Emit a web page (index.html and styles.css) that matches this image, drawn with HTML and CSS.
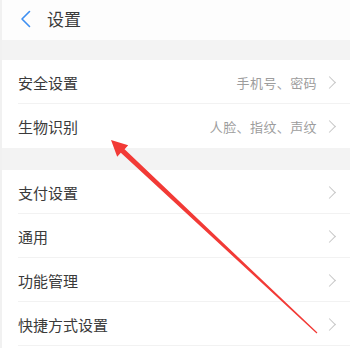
FILE: index.html
```html
<!DOCTYPE html>
<html lang="zh">
<head>
<meta charset="utf-8">
<link rel="stylesheet" href="styles.css">
</head>
<body>
<div class="page">
  <header class="topbar">
    <svg class="back" width="11" height="18" viewBox="0 0 11 18"><path d="M9.5 1.5 L2 9 L9.5 16.5" fill="none" stroke="#3d8ff2" stroke-width="1.6" stroke-linecap="round" stroke-linejoin="round"/></svg>
    <span class="title">设置</span>
  </header>
  <div class="band band-top"></div>
  <ul class="group">
    <li class="row"><span class="label">安全设置</span><span class="value">手机号、密码</span><i class="chev"></i></li>
    <li class="row last"><span class="label">生物识别</span><span class="value">人脸、指纹、声纹</span><i class="chev"></i></li>
  </ul>
  <div class="band band-mid"></div>
  <ul class="group">
    <li class="row"><span class="label">支付设置</span><i class="chev"></i></li>
    <li class="row"><span class="label">通用</span><i class="chev"></i></li>
    <li class="row"><span class="label">功能管理</span><i class="chev"></i></li>
    <li class="row"><span class="label">快捷方式设置</span><i class="chev"></i></li>
  </ul>
  <svg class="annot" width="350" height="348" viewBox="0 0 350 348">
    <polygon fill="#f23a36" points="111,140 128.2,145.2 124.6,149.2 317.4,332.6 316.6,333.4 120.8,152.8 117.2,156.8"/>
  </svg>
</div>
</body>
</html>
```
FILE: styles.css
```css
* { box-sizing: border-box; }
html, body { margin: 0; padding: 0; background: #ffffff; }
body {
  font-family: "Noto Sans CJK SC", "Noto Sans", sans-serif;
  width: 350px;
  height: 348px;
  overflow: hidden;
}
.page {
  position: relative;
  width: 350px;
  height: 348px;
  border-left: 2px solid #f1f1f1;
  background: #ffffff;
}
.topbar {
  height: 40px;
  display: flex;
  align-items: center;
  padding-left: 18px;
  background: #fdfdfd;
}
.back { display: block; margin-top: -2px; }
.title {
  margin-left: 16px;
  font-size: 17px;
  color: #3a3a3a;
  line-height: 1;
  margin-top: -3px;
}
.band { background: #f3f3f3; }
.band-top { height: 20px; }
.band-mid { height: 22px; }
.group { list-style: none; margin: 0; padding: 0 0 0 16px; }
.row {
  height: 44px;
  display: flex;
  align-items: center;
  border-bottom: 1px solid #f2f2f2;
  padding-right: 15px;
}
.row.last { border-bottom: none; }
.label {
  flex: 1;
  font-size: 15px;
  color: #3a3a3a;
  margin-top: 1px;
}
.value {
  font-size: 13px;
  color: #9d9d9d;
  margin-right: 8px;
  margin-top: 1px;
  letter-spacing: 0.4px;
}
.chev {
  width: 9px;
  height: 9px;
  border-top: 1.5px solid #c6c6c6;
  border-right: 1.5px solid #c6c6c6;
  transform: rotate(45deg);
  margin-right: 1px;
  margin-top: 1px;
}
.annot {
  position: absolute;
  left: -2px;
  top: 0;
  pointer-events: none;
}
```
